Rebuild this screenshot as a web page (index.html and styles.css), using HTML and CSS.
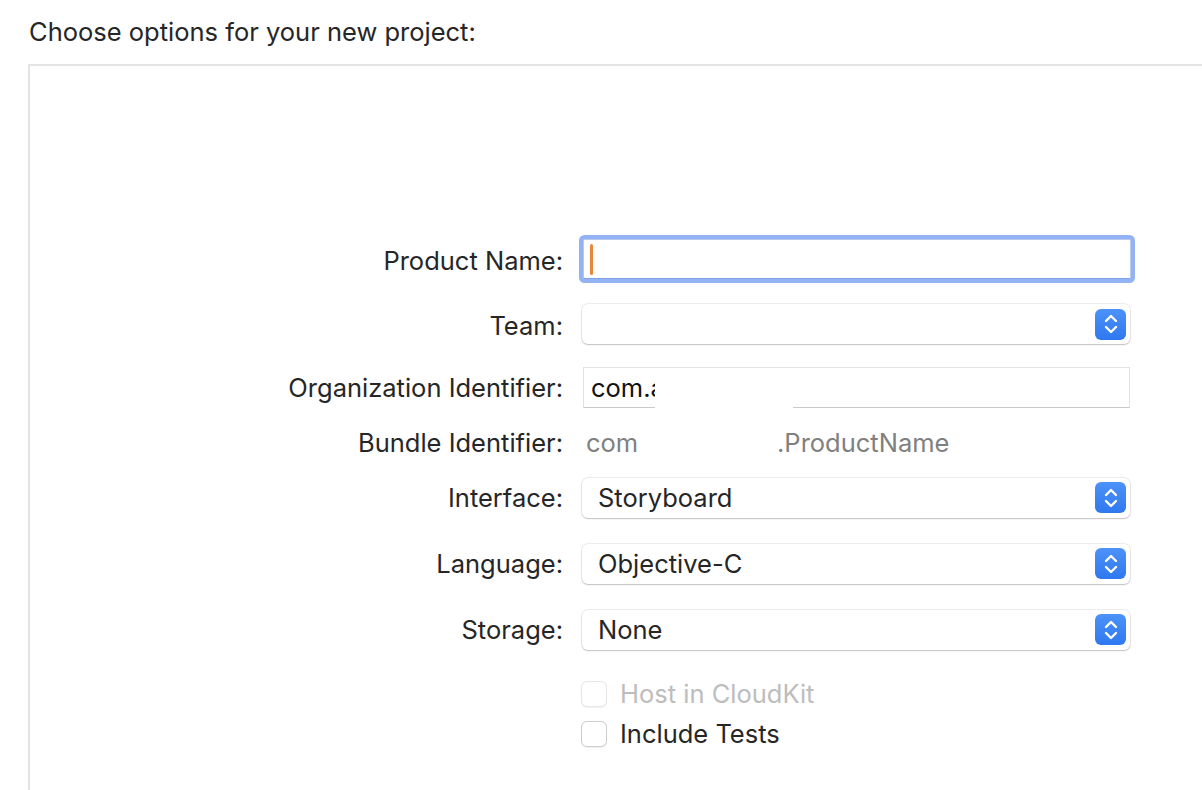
FILE: index.html
```html
<!DOCTYPE html>
<html>
<head>
<meta charset="utf-8">
<link rel="stylesheet" href="styles.css">
</head>
<body>
<div class="header">Choose options for your new project:</div>
<div class="panel">
  <div class="form">
    <div class="row row-product">
      <div class="label">Product Name:</div>
      <div class="field focused"><span class="caret"></span></div>
    </div>
    <div class="row row-team">
      <div class="label">Team:</div>
      <div class="popup"><span class="popup-text"></span><span class="stepper"><svg width="16" height="24" viewBox="0 0 16 24"><path d="M3 9 L8 4 L13 9 M3 15 L8 20 L13 15" fill="none" stroke="#fff" stroke-width="2.4" stroke-linecap="round" stroke-linejoin="round"/></svg></span></div>
    </div>
    <div class="row row-org">
      <div class="label">Organization Identifier:</div>
      <div class="field plain"><span class="field-text">com.a</span><span class="redact"></span></div>
    </div>
    <div class="row row-bundle">
      <div class="label">Bundle Identifier:</div>
      <div class="bundle"><span class="bundle-a">com</span><span class="bundle-b">.ProductName</span></div>
    </div>
    <div class="row row-popup row-interface">
      <div class="label">Interface:</div>
      <div class="popup"><span class="popup-text">Storyboard</span><span class="stepper"><svg width="16" height="24" viewBox="0 0 16 24"><path d="M3 9 L8 4 L13 9 M3 15 L8 20 L13 15" fill="none" stroke="#fff" stroke-width="2.4" stroke-linecap="round" stroke-linejoin="round"/></svg></span></div>
    </div>
    <div class="row row-popup">
      <div class="label">Language:</div>
      <div class="popup"><span class="popup-text">Objective-C</span><span class="stepper"><svg width="16" height="24" viewBox="0 0 16 24"><path d="M3 9 L8 4 L13 9 M3 15 L8 20 L13 15" fill="none" stroke="#fff" stroke-width="2.4" stroke-linecap="round" stroke-linejoin="round"/></svg></span></div>
    </div>
    <div class="row row-popup">
      <div class="label">Storage:</div>
      <div class="popup"><span class="popup-text">None</span><span class="stepper"><svg width="16" height="24" viewBox="0 0 16 24"><path d="M3 9 L8 4 L13 9 M3 15 L8 20 L13 15" fill="none" stroke="#fff" stroke-width="2.4" stroke-linecap="round" stroke-linejoin="round"/></svg></span></div>
    </div>
    <div class="row row-check row-host">
      <div class="label"></div>
      <div class="check disabled"><span class="box"></span><span class="check-text">Host in CloudKit</span></div>
    </div>
    <div class="row row-check row-tests">
      <div class="label"></div>
      <div class="check"><span class="box"></span><span class="check-text">Include Tests</span></div>
    </div>
  </div>
</div>
</body>
</html>
```

FILE: styles.css
```css
html, body {
  margin: 0;
  padding: 0;
  background: #ffffff;
  height: 100%;
  overflow: hidden;
}
body {
  font-family: "Inter", "Noto Sans", "Liberation Sans", sans-serif;
  color: #262626;
  font-size: 25.5px;
  display: flex;
  flex-direction: column;
}
.header {
  height: 64px;
  flex: none;
  box-sizing: border-box;
  padding: 17px 0 0 29px;
  font-size: 25.5px;
  line-height: 30px;
  color: #262626;
}
.panel {
  flex: 1;
  margin-left: 28px;
  border-top: 2px solid #e4e4e4;
  border-left: 2px solid #e4e4e4;
  overflow: hidden;
}
.form {
  padding-top: 169px;
  display: flex;
  flex-direction: column;
}
.row {
  display: grid;
  grid-template-columns: 533px 553px;
  column-gap: 17px;
  align-items: center;
}
.label {
  text-align: right;
  white-space: nowrap;
  line-height: 30px;
  color: #262626;
}
.row-product { height: 48px; }
.row-product .label { padding-top: 4px; }
.row-team { height: 40px; margin-top: 21px; }
.row-team .label { padding-top: 4px; }
.row-org { height: 41px; margin-top: 23px; }
.row-bundle { height: 30px; margin-top: 20px; }
.row-interface { margin-top: 19px !important; }
.row-popup { height: 41px; margin-top: 25px; }
.row-check { height: 26px; }
.row-host { margin-top: 29px; }
.row-tests { margin-top: 14px; }

.field {
  position: relative;
  box-sizing: border-box;
  background: #fff;
}
.field.focused {
  margin-left: 3px;
  width: 548px;
  height: 40px;
  border: 1px solid #b9c9ec;
  border-bottom-color: #7f9fe6;
  box-shadow: 0 0 0 4px #93b3f5;
  border-radius: 2px;
  display: flex;
  align-items: center;
  padding-left: 6px;
}
.caret {
  display: block;
  width: 3px;
  height: 31px;
  border-radius: 2px;
  background: #e8873a;
}
.field.plain {
  margin-left: 3px;
  width: 547px;
  height: 41px;
  border: 1px solid #e2e2e2;
  border-bottom-color: #c9c9c9;
  display: flex;
  align-items: center;
  padding-left: 7px;
  color: #111;
}
.field-text {
  line-height: 30px;
}
.redact {
  position: absolute;
  left: 71px;
  top: 8px;
  width: 138px;
  height: 40px;
  background: #fff;
}
.bundle {
  padding-left: 6px;
  color: #808080;
  display: flex;
  line-height: 30px;
}
.bundle-a { width: 191px; }
.popup {
  margin-left: 2px;
  width: 548px;
  height: 40px;
  box-sizing: border-box;
  border-radius: 6px;
  background: #fff;
  box-shadow: 0 0 0 1px rgba(0,0,0,0.07), 0 1px 1.5px rgba(0,0,0,0.18);
  display: flex;
  align-items: center;
  justify-content: space-between;
  padding: 0 4px 0 16px;
}
.popup-text {
  line-height: 30px;
  color: #262626;
}
.stepper {
  width: 31px;
  height: 31px;
  border-radius: 6px;
  background: linear-gradient(#4d92f8, #2f78ef);
  display: flex;
  align-items: center;
  justify-content: center;
}
.check {
  display: flex;
  align-items: center;
  margin-left: 1px;
}
.box {
  width: 24px;
  height: 24px;
  border: 1px solid #cccccc;
  border-radius: 6px;
  background: #fff;
  box-shadow: 0 0.5px 1px rgba(0,0,0,0.06);
}
.check-text {
  margin-left: 13px;
  line-height: 30px;
  color: #262626;
}
.check.disabled .box { border-color: #e6e6e6; }
.check.disabled .check-text { color: #bdbdbd; }
```
